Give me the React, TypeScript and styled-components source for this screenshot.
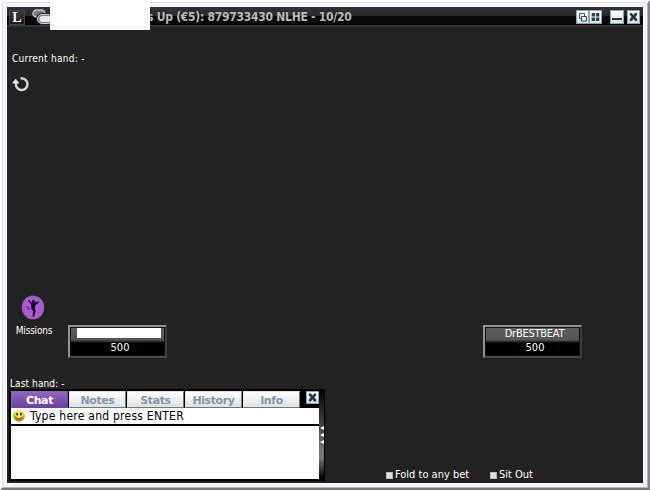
import React from "react";
import styled, { createGlobalStyle, css } from "styled-components";

const Global = createGlobalStyle`
  * { box-sizing: border-box; }
  body { margin: 0; background: #fff; overflow: hidden; }
`;

const Frame = styled.div`
  position: relative;
  width: 650px;
  height: 490px;
  padding: 5px;
  background: #f3f6fd;
  border: 2px solid;
  border-color: #fff #858585 #777 #fff;
  box-shadow: inset 1px 1px 0 #dededf, inset -1px -1px 0 #b4b4b7;
  font-family: "DejaVu Sans Condensed", "DejaVu Sans", sans-serif;
  font-stretch: condensed;
  font-size: 11px;
  line-height: 14px;
  color: #fff;
`;

const Client = styled.div`
  display: flex;
  flex-direction: column;
  width: 636px;
  height: 476px;
  background: #222;
`;

const TitleBar = styled.header`
  display: flex;
  align-items: center;
  height: 20px;
  flex: none;
  padding: 0 3px 0 2px;
  background: linear-gradient(#323232, #292929 9px, #080808 9px, #080808 18px, #393939 18px, #303030 20px);
`;

const Logo = styled.div`
  width: 16px;
  height: 15px;
  border: 1px solid #454545;
  background: linear-gradient(#393939, #191919);
  font: bold 14px/14px "Liberation Serif", serif;
  text-align: center;
`;

const Title = styled.h1`
  flex: 1;
  margin: 0 0 0 95px;
  font-size: 12px;
  line-height: 16px;
  letter-spacing: -0.26px;
  font-weight: bold;
  color: #b9b9b9;
  white-space: nowrap;
`;

const ChipIcon = styled.svg`
  display: block;
  margin-left: 7px;
`;

const Redaction = styled.div`
  position: absolute;
  left: 48px;
  top: -2px;
  width: 100px;
  height: 30px;
  background: #fff;
`;

const WindowButton = styled.button<{ $gap?: number; $width?: number }>`
  display: block;
  flex: none;
  width: ${(p) => p.$width ?? 13}px;
  height: 14px;
  padding: 0;
  margin: 0 0 0 ${(p) => p.$gap ?? 0}px;
  border: 1px solid #91a4b0;
  background: linear-gradient(#fff, #d6e0e8);
  svg { display: block; width: 100%; height: 100%; }
`;

const Table = styled.main`
  display: flex;
  flex-direction: column;
  height: 351px;
`;

const Label = styled.div<{ $spacing?: number }>`
  font-size: 10px;
  line-height: 12px;
  letter-spacing: ${(p) => p.$spacing ?? 0}px;
  white-space: nowrap;
`;

const HandInfo = styled.section`
  height: 268px;
  padding: 26px 0 0 5px;
  svg { display: block; margin-top: 10px; }
`;

const Seats = styled.section`
  display: flex;
  align-items: flex-start;
`;

const Missions = styled.div`
  display: flex;
  flex-direction: column;
  align-items: center;
  width: 36px;
  margin-left: 9px;
  svg { display: block; flex: none; margin: 0 3px 5px 0; }
`;

const Seat = styled.div<{ $left: number }>`
  width: 99px;
  height: 33px;
  margin: 30px 0 0 ${(p) => p.$left}px;
  border: 2px solid;
  border-color: #939393 #3c3c3c #454545 #939393;
  padding: 1px;
  background: linear-gradient(#5c5c5c, #555 13px, #000 16px);
  box-shadow: inset 0 0 0 1px #111;
  font-size: 11px;
  line-height: 14px;
  text-align: center;
`;

const PlayerName = styled.div<{ $hidden?: boolean }>`
  height: 14px;
  line-height: 12px;
  padding-left: 4px;
  letter-spacing: -0.25px;
  ${(p) => p.$hidden && css`
    width: 84px;
    height: 10px;
    margin: 0 0 4px 6px;
    background: #fff;
  `}
`;

const Stack = styled.div`
  padding-left: 5px;
  line-height: 12px;
`;

const Bottom = styled.footer`
  display: flex;
  height: 105px;
  padding-left: 2px;
`;

const ChatColumn = styled.div`
  width: 316px;
`;

const LastHand = styled(Label)`
  height: 11px;
  padding-left: 1px;
`;

const ChatPanel = styled.div`
  display: flex;
  height: 92px;
  padding: 2px 0 2px 2px;
  background: #000;
`;

const ChatMain = styled.div`
  width: 308px;
`;

const Tabs = styled.nav`
  display: flex;
  height: 17px;
  gap: 1px;
`;

const Tab = styled.button<{ $active?: boolean }>`
  width: 57px;
  height: 17px;
  padding: 0;
  border: 1px solid;
  border-color: #d9e2e8 #647783 #647783 #d9e2e8;
  background: linear-gradient(#fff, #dce1e5);
  color: #8298a9;
  font: bold 11px/17px "DejaVu Sans", sans-serif;
  letter-spacing: -0.4px;
  ${(p) => p.$active && css`
    border-color: #8d62b9 #6c429c #6c429c #8d62b9;
    background: linear-gradient(#9267be, #6c419b);
    color: #fff;
  `}
`;

const CloseButton = styled(WindowButton)`
  height: 13px;
  margin-left: 5px;
`;

const Entry = styled.div`
  display: flex;
  align-items: center;
  height: 16px;
  padding-left: 2px;
  margin-bottom: 2px;
  background: #fff;
  color: #000;
  font-size: 12px;
  letter-spacing: 0.25px;
  svg { flex: none; margin-right: 5px; }
`;

const Messages = styled.div`
  height: 53px;
  background: #fff;
`;

const Grip = styled.div`
  display: flex;
  flex-direction: column;
  align-items: center;
  gap: 3px;
  width: 5px;
  margin: -1px 0 0;
  padding-top: 36px;
  background: linear-gradient(#000, #181818 12px, #777 60px, #777 68px, #000 88px);
`;

const GripArrow = styled.i`
  width: 0;
  height: 0;
  border: solid transparent;
  border-width: 2.5px 4px 2.5px 0;
  border-right-color: #fff;
`;

const Options = styled.div`
  display: flex;
  align-items: flex-start;
  margin-left: 61px;
  padding-top: 90px;
`;

const Option = styled.label<{ $width: number }>`
  display: flex;
  align-items: center;
  width: ${(p) => p.$width}px;
  gap: 2px;
  white-space: nowrap;
`;

const Check = styled.span`
  width: 7px;
  height: 7px;
  border: 1px solid #b5b5b5;
  background: #dedede;
`;

const Cross = () => (
  <svg viewBox="0 0 11 11"><path d="M2 1.8h2L5.5 4 7 1.8h2v1.4L7.2 5.4 9 7.7v1.5H7L5.5 7 4 9.2H2V7.7l1.8-2.3L2 3.2z" fill="#25333d" stroke="#25333d" strokeWidth=".4" /></svg>
);

export default function App() {
  return (
    <Frame>
      <Global />
      <Client>
        <TitleBar>
          <Logo>L</Logo>
          <ChipIcon width="20" height="16">
            <rect x="1" y="1" width="12" height="7" rx="3.5" fill="#777e85" stroke="#bdc4ca" strokeWidth="1.5" />
            <rect x="5.5" y="5.5" width="15" height="9" rx="4.5" fill="#d7dfe7" stroke="#222" strokeWidth="3" />
            <rect x="5.5" y="5.5" width="15" height="9" rx="4.5" fill="#777e85" stroke="#c5ccd2" />
            <rect x="7.5" y="7" width="12" height="6" rx="3" fill="#dfe7f0" />
          </ChipIcon>
          <Title>s Up (€5): 879733430 NLHE - 10/20</Title>
          <WindowButton aria-label="Cascade">
            <svg viewBox="0 0 11 12"><path d="M2.5 2.5h5v5h-5z" fill="none" stroke="#40535f" /><path d="M4.5 5.5h5v4.5h-5z" fill="#e7edf2" stroke="#40535f" /></svg>
          </WindowButton>
          <WindowButton aria-label="Tile">
            <svg viewBox="0 0 11 12"><path d="M1.7 2h3.3v3.5H1.7zM6 2h3.3v3.5H6zM1.7 6.5H5V10H1.7zM6 6.5h3.3V10H6z" fill="#30424d" /></svg>
          </WindowButton>
          <WindowButton aria-label="Minimize" $gap={8} $width={14}>
            <svg viewBox="0 0 12 12"><path d="M1 7h10v2H1z" fill="#25333d" /></svg>
          </WindowButton>
          <WindowButton aria-label="Close" $gap={3}><Cross /></WindowButton>
        </TitleBar>
        <Table>
          <HandInfo>
            <Label $spacing={0.3}>Current hand: -</Label>
            <svg width="18" height="18">
              <path d="M8.5 3.5A5.8 5.8 0 1 1 4 8" fill="none" stroke="#d8d8d8" strokeWidth="2.4" />
              <path d="M.6 7.5 3.5 3.7 7 7.5v1H.6z" fill="#e4e4e4" />
            </svg>
          </HandInfo>
          <Seats>
            <Missions>
              <svg width="24" height="25">
                <defs><radialGradient id="mission"><stop stopColor="#b55bdf" /><stop offset=".85" stopColor="#ad56d8" /><stop offset="1" stopColor="#7d6988" /></radialGradient></defs>
                <ellipse cx="12" cy="12.5" rx="11.3" ry="12" fill="url(#mission)" />
                <circle cx="12.3" cy="6.5" r="1.6" fill="#150719" />
                <path d="M7.8 5 10.5 8H13l4.3-1.4.4 1L14 10.2l-.4 3 .8 2.8-1.5 5.4h-1l.5-5-1.8-3-.2-3.8-3.2-4z" fill="#150719" stroke="#150719" strokeWidth=".5" />
                <path d="M5 12h3M6.5 14h3" stroke="#4b1b60" strokeWidth=".9" />
              </svg>
              <Label $spacing={-0.2}>Missions</Label>
            </Missions>
            <Seat $left={16}><PlayerName $hidden /><Stack>500</Stack></Seat>
            <Seat $left={316}><PlayerName>DrBESTBEAT</PlayerName><Stack>500</Stack></Seat>
          </Seats>
        </Table>
        <Bottom>
          <ChatColumn>
            <LastHand $spacing={0.1}>Last hand: -</LastHand>
            <ChatPanel>
              <ChatMain>
                <Tabs>
                  <Tab $active>Chat</Tab><Tab>Notes</Tab><Tab>Stats</Tab><Tab>History</Tab><Tab>Info</Tab>
                  <CloseButton aria-label="Close chat"><Cross /></CloseButton>
                </Tabs>
                <Entry>
                  <svg width="12" height="12"><defs><radialGradient id="smile" cy=".35"><stop stopColor="#fffb82" /><stop offset=".65" stopColor="#f4df25" /><stop offset="1" stopColor="#bd9123" /></radialGradient></defs><circle cx="6" cy="6" r="5.8" fill="url(#smile)" /><ellipse cx="4.2" cy="4.2" rx=".8" ry="1.4" /><ellipse cx="7.8" cy="4.2" rx=".8" ry="1.4" /><path d="M2.5 7.2q3.5 4 7 0" fill="none" stroke="#443100" /></svg>
                  <span>Type here and press ENTER</span>
                </Entry>
                <Messages />
              </ChatMain>
              <Grip><GripArrow /><GripArrow /><GripArrow /></Grip>
            </ChatPanel>
          </ChatColumn>
          <Options>
            <Option $width={104}><Check />Fold to any bet</Option>
            <Option $width={60}><Check />Sit Out</Option>
          </Options>
        </Bottom>
      </Client>
      <Redaction />
    </Frame>
  );
}
